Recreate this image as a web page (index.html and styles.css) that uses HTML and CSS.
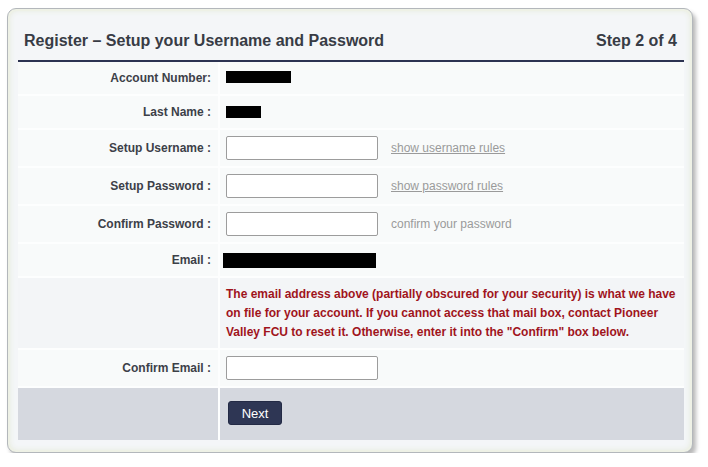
FILE: index.html
```html
<!DOCTYPE html>
<html>
<head>
<meta charset="utf-8">
<link rel="stylesheet" href="styles.css">
</head>
<body>
<div class="panel">
  <div class="header">
    <span class="title">Register – Setup your Username and Password</span>
    <span class="step">Step 2 of 4</span>
  </div>
  <div class="form">
    <div class="label row-s">Account Number:</div>
    <div class="value row-s"><span class="redact r-acct"></span></div>

    <div class="label row-s">Last Name :</div>
    <div class="value row-s"><span class="redact r-name"></span></div>

    <div class="label row-i">Setup Username :</div>
    <div class="value row-i"><input class="field" type="text"><a class="hint link" href="#">show username rules</a></div>

    <div class="label row-i">Setup Password :</div>
    <div class="value row-i"><input class="field" type="password"><a class="hint link" href="#">show password rules</a></div>

    <div class="label row-i">Confirm Password :</div>
    <div class="value row-i"><input class="field" type="password"><span class="hint">confirm your password</span></div>

    <div class="label row-s">Email :</div>
    <div class="value row-s"><span class="redact r-email"></span></div>

    <div class="label msg-cell"></div>
    <div class="value msg-cell"><p class="msg">The email address above (partially obscured for your security) is what we have on file for your account. If you cannot access that mail box, contact Pioneer Valley FCU to reset it. Otherwise, enter it into the "Confirm" box below.</p></div>

    <div class="label row-i">Confirm Email :</div>
    <div class="value row-i"><input class="field" type="text"></div>

    <div class="label foot"></div>
    <div class="value foot"><button class="next" type="button">Next</button></div>
  </div>
</div>
</body>
</html>
```

FILE: styles.css
```css
html, body {
  margin: 0;
  padding: 0;
  background: #ffffff;
}

body {
  font-family: "Liberation Sans", Arial, sans-serif;
  color: #3a3e46;
}

.panel {
  box-sizing: border-box;
  width: 686px;
  height: 445px;
  margin: 8px 0 0 7px;
  padding: 0 8px 12px 10px;
  background: #f4f6f8;
  border: 1px solid #b3b7bb;
  border-radius: 9px;
  box-shadow: 3px 4px 4px rgba(0, 0, 0, 0.28), inset 0 0 0 2px #eef1e6, inset 0 0 7px #dfe5cf;
}

.header {
  height: 53px;
  display: flex;
  justify-content: space-between;
  align-items: flex-end;
  box-sizing: border-box;
  padding: 0 7px 9px 6px;
  border-bottom: 2px solid #2c3352;
  font-size: 16px;
  line-height: 20px;
  font-weight: bold;
  color: #383c45;
}

.form {
  display: grid;
  grid-template-columns: 200px 464px;
  column-gap: 2px;
  row-gap: 2px;
  background: #fdfefe;
}

.label, .value {
  background: #f8fafa;
  display: flex;
  align-items: center;
  font-size: 12px;
}

.label {
  justify-content: flex-end;
  padding-right: 7px;
  font-weight: bold;
  color: #3c4048;
}

.value {
  padding-left: 6px;
}

.row-s { height: 32px; }
.row-i { height: 36px; }

.msg-cell {
  height: 70px;
  background: #f3f5f7;
}

.msg {
  margin: 0;
  padding: 0 8px 0 0;
  font-size: 12px;
  line-height: 19px;
  font-weight: bold;
  color: #a0141c;
}

.foot {
  height: 52px;
  background: #d5d8df;
  align-items: flex-start;
}

.redact {
  display: block;
  background: #000;
}

.r-acct { width: 65px; height: 12px; margin-top: -2px; }
.r-name { width: 35px; height: 12px; margin-top: -1px; }
.r-email { width: 153px; height: 15px; margin-left: -3px; }

.field {
  box-sizing: border-box;
  width: 152px;
  height: 24px;
  margin: 0 13px 0 0;
  padding: 0 4px;
  border: 1px solid #9c9c9c;
  border-radius: 2px;
  background: #fff;
  font-family: "Liberation Sans", Arial, sans-serif;
  font-size: 12px;
}

.hint {
  font-size: 12px;
  color: #9a9a9a;
}

.link {
  text-decoration: underline;
}

.next {
  margin: 13px 0 0 2px;
  width: 54px;
  height: 24px;
  padding: 0;
  background: #2e3654;
  border: 1px solid #232a45;
  border-radius: 3px;
  color: #ffffff;
  font-family: "Liberation Sans", Arial, sans-serif;
  font-size: 13px;
  cursor: pointer;
}
```
